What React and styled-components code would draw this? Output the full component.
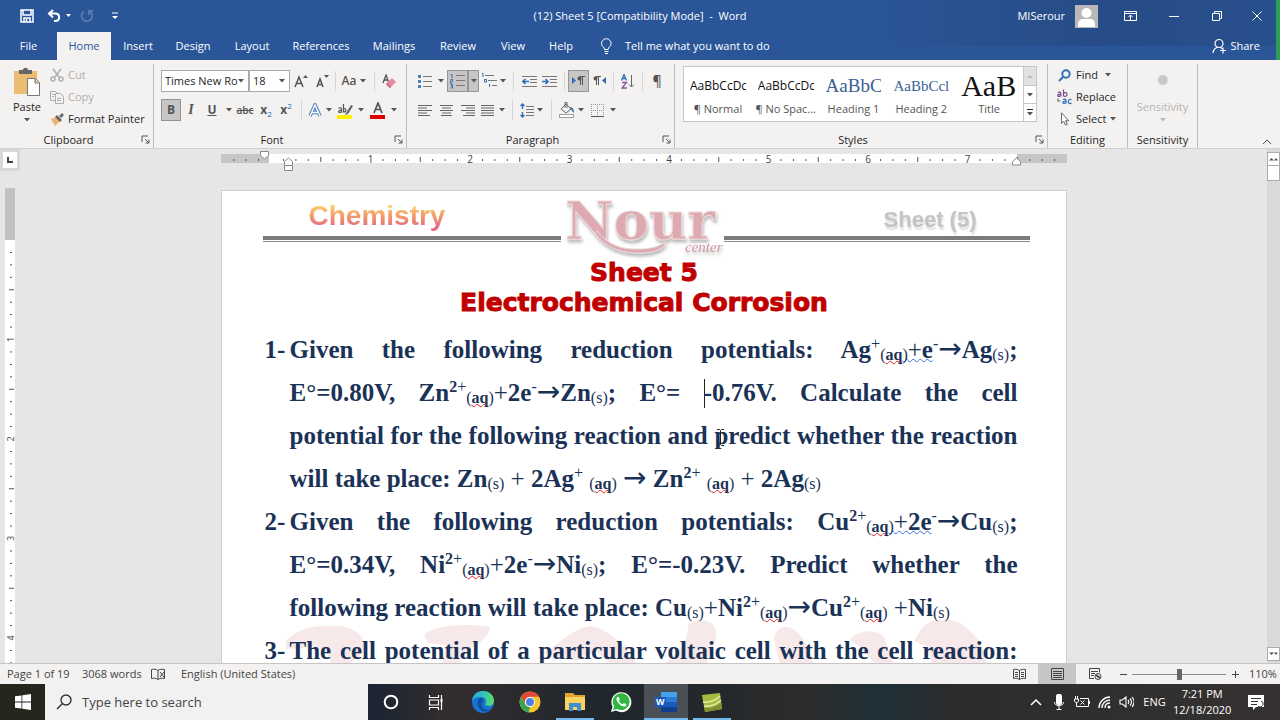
import React from "react";
import styled, { createGlobalStyle, css } from "styled-components";

const Global = createGlobalStyle`
  *, *::before, *::after { box-sizing: border-box; }
  body { margin: 0; background: #e6e6e6; }
  button, input, select { font: inherit; color: inherit; margin: 0; }
  button { border: 0; padding: 0; background: none; }
  a { color: inherit; text-decoration: none; }
`;

const ui = `"Open Sans", "Noto Sans", sans-serif`;

const App_ = styled.div`
  height: 100vh;
  display: flex;
  flex-direction: column;
  overflow: hidden;
  font-family: ${ui};
  font-size: 11px;
  line-height: 16px;
  color: #262626;
`;

/* ---------- title bar and tabs ---------- */

const Chrome = styled.header`
  background:
    linear-gradient(90deg, #25467c00, #25467c99 60%, #25467c66) 100% 0 / 440px 46px no-repeat,
    #2a5699;
  border-right: 4px solid #2f9e55;
  color: #fff;
  flex: none;
`;

const TitleBar = styled.div`
  height: 32px;
  display: grid;
  grid-template-columns: 1fr auto 1fr;
  align-items: center;
`;

const QuickAccess = styled.div`
  display: flex;
  align-items: center;
  padding-left: 20px;
  gap: 6px;
`;

const DocTitle = styled.div`
  white-space: pre;
  padding-left: 4px;
`;

const WindowTools = styled.div`
  display: flex;
  align-items: center;
  justify-content: flex-end;
`;

const Account = styled.button`
  display: flex;
  align-items: center;
  gap: 10px;
  margin-right: 11px;
`;

const WinButton = styled.button`
  width: ${(p) => p.$w || 43}px;
  height: 28px;
  display: grid;
  place-items: center;
`;

const QaButton = styled.button`
  display: grid;
  place-items: center;
  height: 20px;
`;

const TabBar = styled.nav`
  height: 28px;
  display: flex;
  align-items: stretch;
`;

const Tab = styled.a`
  width: ${(p) => p.$w}px;
  display: grid;
  place-items: center;
  ${(p) =>
    p.$active &&
    css`
      background: #f3f2f1;
      color: #2a5699;
    `}
`;

const TellMe = styled.button`
  display: flex;
  align-items: center;
  gap: 12px;
  margin-left: 17px;
`;

const Share = styled.button`
  display: flex;
  align-items: center;
  gap: 3px;
  margin-left: auto;
  padding-right: 16px;
`;

/* ---------- ribbon ---------- */

const Ribbon = styled.div`
  height: 89px;
  flex: none;
  display: flex;
  background: #f3f2f1;
  border-bottom: 1px solid #d2d0ce;
  padding-top: 4px;
`;

const Group = styled.section`
  width: ${(p) => p.$w}px;
  height: 84px;
  flex: none;
  display: flex;
  flex-direction: column;
  border-right: 1px solid #c0bebc;
  padding-left: ${(p) => p.$pad || 0}px;
`;

const GroupBody = styled.div`
  flex: 1;
  display: flex;
  ${(p) => p.$column && "flex-direction: column;"}
`;

const GroupFooter = styled.footer`
  height: 16px;
  margin-left: ${(p) => -(p.$pad || 0)}px;
  display: grid;
  grid-template-columns: 1fr auto;
  text-align: center;
  align-items: center;
  button { width: 16px; }
`;

const GroupName = styled.span`
  white-space: nowrap;
`;

const ToolRow = styled.div`
  display: flex;
  align-items: center;
  height: 22px;
  margin-top: ${(p) => p.$top}px;
`;

const Tool = styled.button`
  width: ${(p) => p.$w}px;
  height: 22px;
  flex: none;
  display: grid;
  place-items: center;
  color: #555;
  ${(p) =>
    p.$on &&
    css`
      background: #c8c6c4;
      border: 1px solid #979593;
    `}
`;

const Divider = styled.span`
  width: ${(p) => p.$w}px;
  height: 20px;
  flex: none;
  background: linear-gradient(#d8d6d4, #d8d6d4) center / 1px 100% no-repeat;
`;

const Glyph = styled.span`
  font-size: ${(p) => p.$size || 12}px;
  line-height: 16px;
  font-weight: ${(p) => (p.$bold ? 700 : 600)};
  font-style: ${(p) => (p.$italic ? "italic" : "normal")};
  font-family: ${(p) => (p.$serif ? `"Liberation Serif", serif` : ui)};
  text-decoration: ${(p) => p.$line || "none"};
  white-space: nowrap;
  sup, sub { font-size: 8px; line-height: 0; color: #2b6cb0; font-weight: 400; }
`;

const Combo = styled.label`
  width: ${(p) => p.$w}px;
  height: 22px;
  flex: none;
  display: flex;
  align-items: center;
  padding-right: 4px;
  background: #fff;
  border: 1px solid #ababab;
  select {
    appearance: none;
    flex: 1;
    min-width: 0;
    height: 20px;
    border: 0;
    background: none;
    padding: 0 0 0 3px;
  }
`;

const BigButton = styled.button`
  width: ${(p) => p.$w}px;
  display: flex;
  flex-direction: column;
  align-items: center;
  gap: 3px;
  color: ${(p) => (p.$off ? "#b5b3b1" : "inherit")};
  padding: 3px 0 0 ${(p) => p.$pad || 0}px;
`;

const SmallList = styled.div`
  display: flex;
  flex-direction: column;
`;

const SmallButton = styled.button`
  height: 22px;
  display: flex;
  align-items: center;
  gap: 4px;
  white-space: nowrap;
  color: ${(p) => (p.$off ? "#b0aeac" : "inherit")};
`;

const Gallery = styled.div`
  width: 354px;
  height: 56px;
  margin-top: 2px;
  display: flex;
  background: #fff;
  border: 1px solid #c8c6c4;
`;

const StyleCard = styled.button`
  flex: 1;
  min-width: 0;
  display: flex;
  flex-direction: column;
  align-items: center;
  padding: 0 6px;
  color: #555;
  white-space: nowrap;
`;

const Preview = styled.span`
  width: 100%;
  height: 34px;
  flex: none;
  overflow: hidden;
  text-align: left;
  line-height: 38px;
  color: ${(p) => p.$color || "#111"};
  font-size: ${(p) => p.$size}px;
  font-family: ${(p) => (p.$serif ? `"Liberation Serif", serif` : ui)};
`;

const GalleryNav = styled.div`
  width: 13px;
  display: grid;
  grid-template-rows: 1fr 1fr 1fr;
  border-left: 1px solid #c8c6c4;
  button { display: grid; place-items: center; }
  button + button { border-top: 1px solid #c8c6c4; }
  button:first-child { background: #e3e1df; }
`;

const Collapse = styled.button`
  margin-left: auto;
  align-self: flex-end;
  width: 18px;
  height: 12px;
  display: grid;
  place-items: center start;
`;

/* ---------- workspace ---------- */

const Workspace = styled.main`
  flex: 1;
  min-height: 0;
  display: grid;
  grid-template-columns: 20px 1fr 13px;
  background: #e6e6e6;
`;

const SideRuler = styled.div`
  min-height: 0;
  overflow: hidden;
  svg { display: block; }
`;

const TabStop = styled.button`
  width: 20px;
  height: 22px;
  display: grid;
  place-items: center;
  background: #fff;
  border: 3px solid #d8d8d8;
  margin-bottom: 17px;
`;

const Canvas = styled.div`
  min-width: 0;
  min-height: 0;
  display: flex;
  flex-direction: column;
  align-items: center;
  overflow: hidden;
`;

const RulerBox = styled.div`
  height: 41px;
  flex: none;
  svg { display: block; }
`;

const Paper = styled.article`
  position: relative;
  flex: 1;
  min-height: 0;
  overflow: hidden;
  width: 846px;
  max-width: 100%;
  background: #fff;
  border: 1px solid #cfcfcf;
  border-bottom: 0;
  padding: 0 36px 0 41px;
`;

const Watermark = styled.svg`
  position: absolute;
  left: 0;
  bottom: 0;
`;

const PaperHead = styled.div`
  display: flex;
  height: 67px;
`;

const HeadSide = styled.div`
  flex: ${(p) => p.$grow} 1 0;
  display: flex;
  flex-direction: column;
`;

const HeadRule = styled.div`
  height: 6px;
  background: linear-gradient(#7b7b7b 4px, #fff 4px, #fff 5px, #8a8a8a 5px);
`;

const Subject = styled.div`
  height: 45px;
  padding: 5px 0 0 46px;
  align-self: flex-start;
  font: 700 28px/40px "Liberation Sans", Arial, sans-serif;
  background: linear-gradient(#fbd36b 14px, #f39a6a 25px, #e56b82 36px);
  background-clip: text;
  -webkit-background-clip: text;
  color: transparent;
`;

const SheetNo = styled.div`
  height: 45px;
  padding: 9px 53px 0 0;
  align-self: flex-end;
  font: 700 22px/40px "Liberation Sans", Arial, sans-serif;
  color: #c4c4c4;
  text-shadow: 1px 3px 2px #e0e0e0;
`;

const Title = styled.h1`
  margin: 0;
  padding-right: 4px;
  text-align: center;
  color: #c00000;
  -webkit-text-stroke: 1px #c00000;
  font: 700 25px/30px "DejaVu Sans", sans-serif;
`;

const Questions = styled.ol`
  position: relative;
  list-style: none;
  margin: 10px 0 0;
  padding: 0 12px 0 2px;
  color: #1b3257;
  font: 700 25px/43px "Liberation Serif", "Times New Roman", serif;
`;

const Question = styled.li`
  display: grid;
  grid-template-columns: 25px 1fr;
`;

const Line = styled.span`
  display: block;
  white-space: nowrap;
  text-align: justify;
  text-align-last: ${(p) => (p.$last ? "left" : "justify")};
`;

const Thin = styled.span`
  font-weight: 400;
`;

const ArrowGlyph = styled.span`
  font: 400 28px/0 "DejaVu Sans", sans-serif;
`;

const Sup = styled.sup`
  font-size: 16px;
  line-height: 0;
  vertical-align: 9px;
`;

const Sub = styled.sub`
  font-size: 16px;
  line-height: 0;
  font-weight: 400;
  vertical-align: -2px;
`;

const Squiggle = styled.u`
  font-weight: 700;
  text-decoration: underline wavy ${(p) => p.$color || "#e02020"} 1px;
  text-underline-offset: 0;
  text-decoration-skip-ink: none;
`;

const TextCaret = styled.span`
  display: inline-block;
  width: 1px;
  height: 29px;
  margin-right: -1px;
  vertical-align: -7px;
  background: #222;
`;

const PointerWrap = styled.span`
  position: relative;
  svg { position: absolute; left: 3px; top: 7px; }
`;

const ScrollBar = styled.div`
  display: flex;
  flex-direction: column;
  padding: 3px 0 2px;
  background: #d9d9d9;
`;

const ScrollButton = styled.button`
  height: 14px;
  display: grid;
  place-items: center;
  background: #fff;
  border: 1px solid #ababab;
`;

const ScrollThumb = styled.div`
  height: 15px;
  margin-bottom: auto;
  background: #fff;
  border: 1px solid #ababab;
  border-top: 0;
`;

/* ---------- status bar ---------- */

const StatusBar = styled.footer`
  height: 21px;
  flex: none;
  display: flex;
  align-items: center;
  background: #f3f2f1;
  border-top: 1px solid #c8c6c4;
  padding-left: 7px;
  color: #444;
`;

const StatusItem = styled.span`
  width: ${(p) => p.$w}px;
  white-space: nowrap;
  svg { display: block; }
`;

const Views = styled.div`
  display: flex;
  margin-left: auto;
`;

const ViewButton = styled.button`
  width: 38px;
  height: 20px;
  display: grid;
  place-items: center;
  background: ${(p) => (p.$on ? "#c8c6c4" : "none")};
`;

const ZoomButton = styled.button`
  width: 18px;
  height: 20px;
  display: grid;
  place-items: center;
`;

const ZoomSlider = styled.input`
  appearance: none;
  width: 94px;
  height: 20px;
  background: linear-gradient(#8a8a8a, #8a8a8a) center / 100% 1px no-repeat;
  &::-webkit-slider-thumb {
    appearance: none;
    width: 5px;
    height: 11px;
    background: #666;
  }
`;

const ZoomValue = styled.span`
  width: 36px;
  padding-left: 5px;
`;

/* ---------- task bar ---------- */

const TaskBar = styled.div`
  height: 36px;
  flex: none;
  display: flex;
  align-items: stretch;
  color: #fff;
  background: linear-gradient(90deg, #25261d 0, #25261d 4%, #1b2433 29%, #332d2f 35%, #1f272d 47%, #24282c 56%, #2e2c2b 63%, #1d3038 69%, #2b2c2c 74%, #353231 100%);
`;

const StartButton = styled.button`
  width: 45px;
  display: grid;
  place-items: center;
`;

const Search = styled.label`
  width: 323px;
  display: flex;
  align-items: center;
  gap: 10px;
  padding-left: 11px;
  background: #f2f1f2;
  color: #333;
  font-size: 13px;
  input {
    flex: 1;
    min-width: 0;
    border: 0;
    outline: 0;
    padding: 0;
    background: none;
  }
  input::placeholder { color: #444; opacity: 1; }
`;

const TaskButton = styled.button`
  width: ${(p) => p.$w || 46}px;
  display: grid;
  place-items: center;
  background: ${(p) => (p.$active ? "#4b5056" : "none")};
`;

const OpenMark = styled.span`
  grid-area: 1 / 1;
  place-self: end center;
  width: ${(p) => p.$w}px;
  height: 2px;
  background: #76b9ed;
  & + svg { grid-area: 1 / 1; }
`;

const Tray = styled.div`
  margin-left: auto;
  display: flex;
  align-items: center;
`;

const TrayButton = styled.button`
  width: ${(p) => p.$w || 23}px;
  height: 36px;
  display: grid;
  place-items: center;
  line-height: 16px;
  white-space: nowrap;
`;

/* ---------- small drawings ---------- */

const Svg = ({ w = 16, h = w, sw = 1, children, vb }) => (
  <svg
    width={w}
    height={h}
    viewBox={vb || `0 0 ${w} ${h}`}
    fill="none"
    stroke="currentColor"
    strokeWidth={sw}
    aria-hidden="true"
  >
    {children}
  </svg>
);

const Caret = ({ color = "#555" }) => (
  <svg width="6" height="4" viewBox="0 0 6 4" aria-hidden="true">
    <path d="M0 0h6L3 3.5z" fill={color} />
  </svg>
);

const CaretTool = ({ w, on }) => (
  <Tool $w={w} $on={on} aria-label="More options">
    <Caret />
  </Tool>
);

const Launcher = () => (
  <Svg w={9}>
    <path d="M1 7V1h6M4 4l4 4M8 4.500V8H4.500" stroke="#555" />
  </Svg>
);

const lineIcon = (rows) => (
  <Svg w={15} h={13}>
    {rows.map(([a, b], i) => (
      <path key={i} d={`M${a} ${1.5 + i * 2.5}H${b}`} stroke="#666" />
    ))}
  </Svg>
);

const ribbonGroup = (name, launcher, pad) => (
  <GroupFooter $pad={pad}>
    <GroupName>{name}</GroupName>
    {launcher && (
      <button aria-label={`${name} settings`}>
        <Launcher />
      </button>
    )}
  </GroupFooter>
);

function Header() {
  const tabs = [
    ["File", 57],
    ["Home", 54],
    ["Insert", 54],
    ["Design", 56],
    ["Layout", 62],
    ["References", 76],
    ["Mailings", 70],
    ["Review", 58],
    ["View", 52],
    ["Help", 44],
  ];
  return (
    <Chrome>
      <TitleBar>
        <QuickAccess>
          <QaButton aria-label="Save">
            <Svg w={14} sw={1.5}>
              <path d="M1 1h12v12H1zM3 1v5h8V1M4 13V9h6v4M6.500 10v3" />
            </Svg>
          </QaButton>
          <QaButton aria-label="Undo">
            <Svg w={32} h={14} sw={2}>
              <path d="M13 1L9 4.500 13 8.500M9.500 4.500H16a3.800 3.800 0 010 7.500h-2" />
              <path d="M26 5h5l-2.500 3z" fill="#fff" stroke="none" />
            </Svg>
          </QaButton>
          <QaButton aria-label="Redo">
            <Svg w={16} h={14} sw={2}>
              <path d="M6 2.500A5.300 5.300 0 1011.500 2.300M11 6V2h4" stroke="#5578b0" />
            </Svg>
          </QaButton>
          <QaButton aria-label="Customize toolbar">
            <Svg w={24} h={8}>
              <path d="M12 1h6" />
              <path d="M12 4h6l-3 3z" fill="#fff" stroke="none" />
            </Svg>
          </QaButton>
        </QuickAccess>
        <DocTitle>{"(12) Sheet 5 [Compatibility Mode]  -  Word"}</DocTitle>
        <WindowTools>
          <Account>
            MISerour
            <svg width="23" height="23" viewBox="0 0 23 23" aria-hidden="true">
              <path fill="#b9b9b9" d="M0 0h23v23H0z" />
              <circle cx="11.500" cy="8" r="5" fill="#fff" />
              <path fill="#fff" d="M3 22v-3c0-3 2-5 5-5h7c3 0 5 2 5 5v3z" />
            </svg>
          </Account>
          <WinButton aria-label="Ribbon display options">
            <Svg w={13} h={10}>
              <path d="M.5.5h12v9H.5zM.5 2.500h12M6.500 9V4M4.500 6l2-2 2 2" />
            </Svg>
          </WinButton>
          <WinButton aria-label="Minimize">
            <Svg w={10} h={10}>
              <path d="M0 5.500h10" />
            </Svg>
          </WinButton>
          <WinButton aria-label="Restore">
            <Svg w={10}>
              <path d="M.5 2.500h7v7h-7zM2.500 2.500v-2h7v7h-2" />
            </Svg>
          </WinButton>
          <WinButton aria-label="Close" $w={38}>
            <Svg w={10}>
              <path d="M.5.5l9 9M9.500.5l-9 9" />
            </Svg>
          </WinButton>
        </WindowTools>
      </TitleBar>
      <TabBar>
        {tabs.map(([name, w]) => (
          <Tab key={name} href="#" $w={w} $active={name === "Home"}>
            {name}
          </Tab>
        ))}
        <TellMe>
          <Svg w={13} h={16}>
            <path d="M4.500 11.500c0-2.500-3-3-3-6a4.800 4.800 0 019.600 0c0 3-3 3.500-3 6zM4.500 13.500h4M5 15.500h3" />
          </Svg>
          Tell me what you want to do
        </TellMe>
        <Share>
          <Svg w={15} h={16} sw={1.2}>
            <circle cx="7" cy="5.500" r="4" />
            <path d="M1 15c.3-3 2-5 4.500-5.800M8.500 9.500l2 1.300M11 9.500v6M8 12.500h6" />
          </Svg>
          Share
        </Share>
      </TabBar>
    </Chrome>
  );
}

function Clipboard() {
  return (
    <Group $w={154}>
      <GroupBody>
        <BigButton $w={50} $pad={4}>
          <Svg w={28} h={29}>
            <path d="M1 4h23v23H1z" fill="#ebbd73" stroke="none" />
            <path d="M6 3h4c0-3 5-3 5 0h4v4H6z" fill="#666" stroke="none" />
            <path d="M14.500 11.500h8l4 4v13h-12zM22 12v4h4" fill="#fff" stroke="#777" />
          </Svg>
          <span>Paste</span>
          <Caret />
        </BigButton>
        <SmallList>
          <SmallButton $off>
            <Svg w={14} sw={1.5}>
              <path d="M3 1l6 8M11 1L5 9" />
              <circle cx="3" cy="11" r="2" />
              <circle cx="11" cy="11" r="2" />
            </Svg>
            Cut
          </SmallButton>
          <SmallButton $off>
            <Svg w={14}>
              <path d="M5 10.500H.5v-9h5l2 2M2 4.500h3M2 6.500h2M5.500 3.500h5l3 3v7h-8zM7 8.500h4M7 10.500h4" />
            </Svg>
            Copy
          </SmallButton>
          <SmallButton>
            <Svg w={14}>
              <path d="M1 7l5-2 4 4-5 5z" fill="#ebb56c" stroke="none" />
              <path d="M5 5l2-2 5 5-2 2zM9 4l3-3 2 2-3 3z" fill="#666" stroke="none" />
            </Svg>
            Format Painter
          </SmallButton>
        </SmallList>
      </GroupBody>
      {ribbonGroup("Clipboard", true)}
    </Group>
  );
}

function FontGroup() {
  return (
    <Group $w={253} $pad={7}>
      <GroupBody $column>
        <ToolRow $top={6}>
          <Combo $w={88}>
            <select aria-label="Font">
              <option>Times New Ro</option>
            </select>
            <Caret />
          </Combo>
          <Combo $w={41}>
            <select aria-label="Font size">
              <option>18</option>
            </select>
            <Caret />
          </Combo>
          <Tool $w={22} aria-label="Grow font">
            <Svg w={14}>
              <path d="M1 13L5 3l4 10M2.500 9.500h5" strokeWidth="1.500" />
              <path d="M9 4h5l-2.500-3z" fill="#555" stroke="none" />
            </Svg>
          </Tool>
          <Tool $w={20} aria-label="Shrink font">
            <Svg w={14}>
              <path d="M2 13l3-8 3 8M3 10.500h4" strokeWidth="1.500" />
              <path d="M9 1h5l-2.500 3z" fill="#555" stroke="none" />
            </Svg>
          </Tool>
          <Divider $w={7} />
          <Tool $w={20}>
            <Glyph>Aa</Glyph>
          </Tool>
          <CaretTool w={8} />
          <Divider $w={14} />
          <Tool $w={16} aria-label="Clear formatting">
            <Svg w={15}>
              <path d="M1 9l3-8 3 8M2 6h4" strokeWidth="1.300" />
              <path d="M4 10l6-6 4 4-6 6z" fill="#e58aa0" stroke="none" />
              <path d="M4 10l1-1 4 4-1 1z" fill="#b95f78" stroke="none" />
            </Svg>
          </Tool>
        </ToolRow>
        <ToolRow $top={7}>
          <Tool $w={20} $on>
            <Glyph $bold>B</Glyph>
          </Tool>
          <Tool $w={20}>
            <Glyph $italic $serif $size={14}>I</Glyph>
          </Tool>
          <Tool $w={22}>
            <Glyph $bold $line="underline">U</Glyph>
          </Tool>
          <CaretTool w={11} />
          <Tool $w={22}>
            <Glyph $size={10} $line="line-through">abc</Glyph>
          </Tool>
          <Tool $w={20}>
            <Glyph $bold>x<sub>2</sub></Glyph>
          </Tool>
          <Tool $w={20}>
            <Glyph $bold>x<sup>2</sup></Glyph>
          </Tool>
          <Divider $w={10} />
          <Tool $w={18} aria-label="Text effects">
            <Svg w={14}>
              <path d="M2 13L7 2l5 11M4 9.500h6" stroke="#4a7fc0" strokeWidth="3.500" />
              <path d="M2 13L7 2l5 11M4 9.500h6" stroke="#fff" strokeWidth="1.500" />
            </Svg>
          </Tool>
          <CaretTool w={10} />
          <Tool $w={22} aria-label="Highlight color">
            <Svg w={16} h={17}>
              <path d="M1.500 6.500c1-1 3-1 3 0v4M4.500 8.500c-3-.5-4 2-1.500 2 1 0 1.500-.5 1.500-1M6.500 2v8.500M6.500 7c3-1.500 3.500 3.500 0 3" strokeWidth="1.200" />
              <path d="M9 11l5-8 2 1-5 8-3 1z" fill="#666" stroke="none" />
              <path d="M0 13h15v4H0z" fill="#fdf000" stroke="none" />
            </Svg>
          </Tool>
          <CaretTool w={10} />
          <Tool $w={24} aria-label="Font color">
            <Svg w={16} h={17}>
              <path d="M4 11l4-10 4 10M5.500 7.500h5" strokeWidth="1.700" />
              <path d="M0 13h15v4H0z" fill="#e00000" stroke="none" />
            </Svg>
          </Tool>
          <CaretTool w={8} />
        </ToolRow>
      </GroupBody>
      {ribbonGroup("Font", true, 7)}
    </Group>
  );
}

const Indent = ({ left }) => (
  <Svg w={15} h={13}>
    <path d="M0 1.500h15M8 4.500h7M8 7.500h7M0 11.500h15" stroke="#777" />
    <path d={left ? "M7 6.500H1M3.500 4L1 6.500 3.500 9" : "M0 6.500h6M3.500 4L6 6.500 3.500 9"} stroke="#2f6fb5" strokeWidth="1.600" />
  </Svg>
);

function Paragraph() {
  return (
    <Group $w={268} $pad={9}>
      <GroupBody $column>
        <ToolRow $top={6}>
          <Tool $w={18} aria-label="Bullets">
            <Svg w={14}>
              <path d="M5 2.500h9M5 7.500h9M5 12.500h9" stroke="#777" />
              <path d="M0 1h3v3H0zM0 6h3v3H0zM0 11h3v3H0z" fill="#4a7fc0" stroke="none" />
            </Svg>
          </Tool>
          <CaretTool w={13} />
          <Tool $w={21} $on aria-label="Numbering">
            <Svg w={15} h={16}>
              <path d="M6 2.500h9M6 7.500h9M6 12.500h9" stroke="#777" />
              <path d="M1 1.500h1V5M.5 6.500h2v1.500h-2V10h2M.5 11.500h2V15h-2M1 13h1.500" stroke="#2f6fb5" />
            </Svg>
          </Tool>
          <CaretTool w={11} on />
          <Tool $w={20} aria-label="Multilevel list">
            <Svg w={16}>
              <path d="M4 2.500h9M7 7.500h9M11 12.500h5" stroke="#777" />
              <path d="M1 .5h1V4M3.500 6.500h2V9h-2zM8.500 11v3" stroke="#2f6fb5" />
            </Svg>
          </Tool>
          <CaretTool w={8} />
          <Divider $w={13} />
          <Tool $w={18} aria-label="Decrease indent"><Indent left /></Tool>
          <Tool $w={22} aria-label="Increase indent"><Indent /></Tool>
          <Divider $w={8} />
          <Tool $w={21} $on aria-label="Left to right">
            <Svg w={13} h={10}>
              <path d="M0 1l4 3.500L0 8z" fill="#2f6fb5" stroke="none" />
              <path d="M8.500 9V.5M10.500 9V.5M7.500.5H13" />
              <circle cx="7.500" cy="2.500" r="2" fill="#555" stroke="none" />
            </Svg>
          </Tool>
          <Tool $w={20} aria-label="Right to left">
            <Svg w={13} h={10}>
              <path d="M13 1L9 4.500 13 8z" fill="#2f6fb5" stroke="none" />
              <path d="M3.500 9V.5M5.500 9V.5M2.500.5H8" />
              <circle cx="2.500" cy="2.500" r="2" fill="#555" stroke="none" />
            </Svg>
          </Tool>
          <Divider $w={9} />
          <Tool $w={20} aria-label="Sort">
            <Svg w={14} h={15}>
              <path d="M.5 6.500l2.500-6 2.500 6M1.500 4.500h3" stroke="#2f6fb5" strokeWidth="1.300" />
              <path d="M1 8.500h4.500L1 14h5" stroke="#8b4fa8" strokeWidth="1.300" />
              <path d="M10.500 1v12M8 10.500l2.500 2.500 2.500-2.500" stroke="#666" />
            </Svg>
          </Tool>
          <Divider $w={8} />
          <Tool $w={22}>
            <Glyph $size={14}>¶</Glyph>
          </Tool>
        </ToolRow>
        <ToolRow $top={7}>
          <Tool $w={18} aria-label="Align left">{lineIcon([[0, 14], [0, 9], [0, 14], [0, 9], [0, 12]])}</Tool>
          <Tool $w={24} aria-label="Center">{lineIcon([[1, 14], [3, 12], [1, 14], [3, 12], [2, 13]])}</Tool>
          <Tool $w={18} aria-label="Align right">{lineIcon([[1, 15], [6, 15], [1, 15], [6, 15], [3, 15]])}</Tool>
          <Tool $w={22} aria-label="Justify">{lineIcon([[1, 14], [1, 14], [1, 14], [1, 14], [1, 14]])}</Tool>
          <CaretTool w={8} />
          <Divider $w={12} />
          <Tool $w={18} aria-label="Line spacing">
            <Svg w={14} h={15}>
              <path d="M6 3.500h8M6 6.500h8M6 9.500h8M6 12.500h8" stroke="#777" />
              <path d="M2.500 1v5M2.500 9v5M.5 3l2-2 2 2M.5 12l2 2 2-2" stroke="#2f6fb5" strokeWidth="1.400" />
            </Svg>
          </Tool>
          <CaretTool w={8} />
          <Divider $w={14} />
          <Tool $w={18} aria-label="Shading">
            <Svg w={16} h={16}>
              <path d="M2 7l5-5 5 5-5 4zM6 6V.5h2V6" stroke="#666" />
              <path d="M11 5c3 0 4 3 4 6l-2-2z" fill="#2f6fb5" stroke="none" />
              <path d="M.5 12.500h14v3H.5z" fill="#fff" stroke="#999" />
            </Svg>
          </Tool>
          <CaretTool w={10} />
          <Tool $w={22} aria-label="Borders">
            <Svg w={13}>
              <path d="M0 .5h13M.5 0v12M12.500 0v12M6.500 0v12M0 6.500h13" stroke="#999" strokeDasharray="1 1" />
              <path d="M0 12.500h13" stroke="#555" />
            </Svg>
          </Tool>
          <CaretTool w={10} />
        </ToolRow>
      </GroupBody>
      {ribbonGroup("Paragraph", true, 9)}
    </Group>
  );
}

function Styles() {
  const styles = [
    ["¶ Normal", "AaBbCcDc", { $size: 12 }],
    ["¶ No Spac...", "AaBbCcDc", { $size: 12 }],
    ["Heading 1", "AaBbC", { $size: 19, $serif: true, $color: "#3a5f96" }],
    ["Heading 2", "AaBbCcl", { $size: 15, $serif: true, $color: "#3a5f96" }],
    ["Title", "AaB", { $size: 30, $serif: true }],
  ];
  return (
    <Group $w={373} $pad={8}>
      <GroupBody>
        <Gallery>
          {styles.map(([name, sample, look]) => (
            <StyleCard key={name}>
              <Preview {...look}>{sample}</Preview>
              {name}
            </StyleCard>
          ))}
          <GalleryNav>
            <button aria-label="Previous styles">
              <Svg w={6} h={4}><path d="M0 4h6L3 1z" fill="#bbb" stroke="none" /></Svg>
            </button>
            <button aria-label="Next styles"><Caret /></button>
            <button aria-label="All styles">
              <Svg w={6} h={7}>
                <path d="M0 .5h6" />
                <path d="M0 3h6L3 6.500z" fill="#555" stroke="none" />
              </Svg>
            </button>
          </GalleryNav>
        </Gallery>
      </GroupBody>
      {ribbonGroup("Styles", true, 8)}
    </Group>
  );
}

function Editing() {
  return (
    <Group $w={80} $pad={9}>
      <GroupBody>
        <SmallList>
          <SmallButton>
            <Svg w={15} h={13} sw={2}>
              <circle cx="9" cy="5" r="3.700" stroke="#2f6fb5" />
              <path d="M6 8l-4 4" stroke="#2f6fb5" />
            </Svg>
            Find&nbsp; <Caret />
          </SmallButton>
          <SmallButton>
            <Svg w={15} h={16} sw={1.2}>
              <path d="M.8 3.600c.8-.8 3-.8 3 .8v3M3.800 5.200C1.500 5 .6 5.800.6 6.400c0 1.200 2.400 1.200 3.200 0M6.500.500v7M6.500 4.500c1-1.500 3.500-1 3.500 1s-2.500 2.500-3.500 1" stroke="#7a4a8c" />
              <path d="M6 10.600c.8-.8 3-.8 3 .8v3M9 12.200c-2.300-.2-3.200.6-3.200 1.200 0 1.200 2.400 1.200 3.200 0M14.500 10.800c-1.500-1-3.300-.2-3.300 1.700s1.800 2.600 3.300 1.600" stroke="#2f6fb5" />
              <path d="M1 9.500v2.500h2.500" stroke="#666" />
            </Svg>
            Replace
          </SmallButton>
          <SmallButton>
            <Svg w={15} h={14}>
              <path d="M4.500.8v10.500l2.400-2 1.600 3.900 1.800-.8-1.600-3.700h3z" fill="#fff" stroke="#666" />
            </Svg>
            Select <Caret />
          </SmallButton>
        </SmallList>
      </GroupBody>
      {ribbonGroup("Editing", false, 9)}
    </Group>
  );
}

function Sensitivity() {
  return (
    <Group $w={70}>
      <GroupBody>
        <BigButton $w={69} $off>
          <Svg w={28} h={29}>
            <circle cx="14" cy="13" r="5" fill="#c9c7c5" stroke="#dddbd9" />
          </Svg>
          <span>Sensitivity</span>
          <Caret color="#bbb" />
        </BigButton>
      </GroupBody>
      {ribbonGroup("Sensitivity", false)}
    </Group>
  );
}

/* One inch at the current zoom, split in eighths on the rulers. */
const INCH = 99.5;

function TopRuler() {
  const zero = 50;
  const ticks = [];
  for (let i = -3; i <= 63; i++) {
    const x = zero + (i * INCH) / 8;
    if (i % 8 === 0) {
      if (i > 0) {
        ticks.push(
          <text key={i} x={x} y="14" textAnchor="middle" fontSize="10" fill="#444">
            {i / 8}
          </text>
        );
      }
    } else {
      const tall = i % 4 === 0;
      ticks.push(<path key={i} d={`M${x} ${tall ? 8 : 10}v${tall ? 5 : 2}`} stroke="#555" />);
    }
  }
  return (
    <RulerBox>
      <svg width="846" height="26" viewBox="0 0 846 26" fontFamily="Open Sans, sans-serif" aria-hidden="true">
        <path fill="#fff" d="M0 5h846v9H0z" />
        <path fill="#c6c6c6" d="M0 5h48v9H0zM796 5h50v9h-50z" />
        {ticks}
        <g fill="#fff" stroke="#888">
          <path d="M39.500 2.500h8v4l-4 3.500-4-3.500z" />
          <path d="M63.500 16.500v-4l4-3.500 4 3.500v4zM63.500 16.500h8v5h-8z" />
          <path d="M791.500 16v-3.500l4-3.500 4 3.500V16z" />
        </g>
      </svg>
    </RulerBox>
  );
}

function LeftRuler() {
  const zero = 52;
  const marks = [];
  for (let i = 1; i <= 60; i++) {
    const y = zero + (i * INCH) / 8;
    if (i % 8 === 0) {
      marks.push(
        <text key={i} transform={`translate(14 ${y}) rotate(-90)`} textAnchor="middle" fontSize="9" fill="#444">
          {i / 8}
        </text>
      );
    } else {
      const tall = i % 4 === 0;
      marks.push(<path key={i} d={`M${tall ? 9 : 10} ${y}h${tall ? 5 : 2}`} stroke="#555" />);
    }
  }
  return (
    <svg width="20" height="800" viewBox="0 0 20 800" fontFamily="Open Sans, sans-serif" aria-hidden="true">
      <path fill="#fff" d="M5 0h10v800H5z" />
      <path fill="#c2c2c2" d="M5 0h10v52H5z" />
      {marks}
    </svg>
  );
}

const Logo = () => (
  <svg width="163" height="70" viewBox="0 0 163 70" role="img" aria-label="Nour center">
    <defs>
      <filter id="soft" x="-10%" y="-10%" width="120%" height="130%">
        <feDropShadow dx="1" dy="3" stdDeviation="1.500" floodColor="#777" floodOpacity="0.5" />
      </filter>
    </defs>
    <g filter="url(#soft)" fill="#dcaab0" stroke="#efd9da" strokeWidth="1">
      <text x="4" y="48" fontFamily="DejaVu Serif, serif" fontWeight="700" fontSize="53">
        Nour
      </text>
      <path d="M36 40c10 13 24 19 42 18 10 0 19-2 27-7-1 6-10 10-22 11-22 1-38-5-49-19z" />
      <text x="124" y="61" fontFamily="Liberation Serif, serif" fontStyle="italic" fontSize="15" fill="#cf949c" strokeWidth="0">
        center
      </text>
    </g>
  </svg>
);

const Aq = ({ open }) => (
  <Sub>
    (<Squiggle>aq</Squiggle>
    {!open && ")"}
  </Sub>
);
const S = () => <Sub>(s)</Sub>;
const Plus = () => <Thin>+</Thin>;
const Minus = () => <Sup><Thin>-</Thin></Sup>;
const Arrow = () => <ArrowGlyph>→</ArrowGlyph>;
const TwoPlus = () => <Sup>2<Plus /></Sup>;
const OnePlus = () => <Sup><Plus /></Sup>;

const Beam = () => (
  <svg width="7" height="17" viewBox="0 0 7 17" fill="none" stroke="#222" aria-hidden="true">
    <path d="M0 .5h2.500l1 1 1-1H7M3.500 1.500v14M0 16.500h2.500l1-1 1 1H7" />
  </svg>
);

function Document() {
  return (
    <Paper>
      <Watermark width="846" height="44" viewBox="0 0 846 44" fill="#f7e9e9" aria-hidden="true">
        <path d="M64 22C74 10 92 6 112 7c18 0 30 8 30 20 0 10-8 14-18 19H110l-6-14-14-4-26 2zM202 16c10-10 40-12 66-8-2 12-14 18-22 22l-10 16h-16l4-20-18-2zM322 34c16-10 28-24 46-27 16 2 30 16 44 30l2 9h-24l-16-14-20 10zM466 6c8-8 26-6 28 6 2 12-6 18-10 34h-22l-18-2c10-10 22-18 22-38zM552 20c2-14 16-16 24-6 8 8 12 18 16 32h-34zM628 20c10-10 26-10 34-2l10 28h-18l-14-16zM698 12c8-14 34-16 48-2 12 10 18 22 18 36h-54l-4-18-14-6z" />
      </Watermark>
      <PaperHead>
        <HeadSide $grow={49}>
          <Subject>Chemistry</Subject>
          <HeadRule />
        </HeadSide>
        <Logo />
        <HeadSide $grow={50}>
          <SheetNo>Sheet (5)</SheetNo>
          <HeadRule />
        </HeadSide>
      </PaperHead>
      <Title>
        Sheet 5
        <br />
        Electrochemical Corrosion
      </Title>
      <Questions>
        <Question>
          <span>1-</span>
          <div>
            <Line>
              Given the following reduction potentials: Ag<OnePlus />
              <Aq open />
              <Squiggle $color="#3b6fe0"><Sub>)</Sub><Plus />e</Squiggle>
              <Minus /><Arrow />Ag<S />;
            </Line>
            <Line>
              E°=0.80V, Zn<TwoPlus /><Aq /><Plus />2e<Minus /><Arrow />Zn<S />; E°= <TextCaret />
              -0.76V. Calculate the cell
            </Line>
            <Line>
              potential for the following reaction and <PointerWrap>p<Beam /></PointerWrap>redict whether the reaction
            </Line>
            <Line $last>
              will take place: Zn<S /> <Plus /> 2Ag<OnePlus /> <Aq /> <Arrow /> Zn<TwoPlus /> <Aq /> <Plus /> 2Ag<S />
            </Line>
          </div>
        </Question>
        <Question>
          <span>2-</span>
          <div>
            <Line>
              Given the following reduction potentials: Cu<TwoPlus />
              <Aq open />
              <Squiggle $color="#3b6fe0"><Sub>)</Sub><Plus />2e</Squiggle>
              <Minus /><Arrow />Cu<S />;
            </Line>
            <Line>
              E°=0.34V, Ni<TwoPlus /><Aq /><Plus />2e<Minus /><Arrow />Ni<S />; E°=-0.23V. Predict whether the
            </Line>
            <Line $last>
              following reaction will take place: Cu<S /><Plus />Ni<TwoPlus /><Aq /><Arrow />Cu<TwoPlus /><Aq /> <Plus />Ni<S />
            </Line>
          </div>
        </Question>
        <Question>
          <span>3-</span>
          <div>
            <Line>The cell potential of a particular voltaic cell with the cell reaction:</Line>
          </div>
        </Question>
      </Questions>
    </Paper>
  );
}

function Status() {
  return (
    <StatusBar>
      <StatusItem $w={75}>Page 1 of 19</StatusItem>
      <StatusItem $w={69}>3068 words</StatusItem>
      <StatusItem $w={30}>
        <Svg w={14} h={12}>
          <path d="M7 11.500C5 10 3 10 .5 10.500v-9C3 1 5 1 7 2.500zM7 2.500C8 1.500 10 1 13.500 1.500v9c-2-.5-4.500-.5-6.500 1M9 4l4 5M13 4L9 9" />
        </Svg>
      </StatusItem>
      <StatusItem>English (United States)</StatusItem>
      <Views>
        <ViewButton aria-label="Read mode">
          <Svg w={13} h={12}>
            <path d="M6.500 11.500C5 10.500 3 10 .5 10.500v-9c2.500-.5 4.500 0 6 1zM6.500 2.500c1.500-1 3.500-1.500 6-1v9c-2.500-.5-4.500 0-6 1M2 4.500h3M2 6.500h3M2 8.500h3M8 4.500h3M8 6.500h3M8 8.500h3" />
          </Svg>
        </ViewButton>
        <ViewButton $on aria-label="Print layout">
          <Svg w={13} h={12}>
            <path d="M.5.5h12v11H.5zM2 3.500h9M2 5.500h9M2 7.500h9M2 9.500h9" />
          </Svg>
        </ViewButton>
        <ViewButton aria-label="Web layout">
          <Svg w={13} h={12}>
            <path d="M5 10.500H.5V.5h10v4M2 3.500h7M2 5.500h4M2 7.500h3" />
            <circle cx="9" cy="8.500" r="3" />
            <path d="M7 7l4 3" strokeWidth="2" />
          </Svg>
        </ViewButton>
      </Views>
      <ZoomButton aria-label="Zoom out">
        <Svg w={9}><path d="M1 4.500h7" /></Svg>
      </ZoomButton>
      <ZoomSlider type="range" min="0" max="100" defaultValue="51" aria-label="Zoom" />
      <ZoomButton aria-label="Zoom in">
        <Svg w={9}><path d="M1 4.500h7M4.500 1v7" /></Svg>
      </ZoomButton>
      <ZoomValue>110%</ZoomValue>
    </StatusBar>
  );
}

function Tasks() {
  return (
    <TaskBar>
      <StartButton aria-label="Start">
        <svg width="16" height="16" viewBox="0 0 16 16" fill="#fff" aria-hidden="true">
          <path d="M0 2.300l6.500-.9v6.200H0zM7.300 1.300L16 0v7.600H7.300zM0 8.400h6.500v6.200L0 13.700zM7.300 8.400H16V16l-8.700-1.300z" />
        </svg>
      </StartButton>
      <Search>
        <Svg w={16} sw={1.4}>
          <circle cx="10" cy="6" r="5" />
          <path d="M6.500 9.500L1 15" />
        </Svg>
        <input type="search" placeholder="Type here to search" aria-label="Type here to search" />
      </Search>
      <TaskButton $w={45} aria-label="Cortana">
        <Svg w={16} sw={2}><circle cx="8" cy="8" r="6.300" /></Svg>
      </TaskButton>
      <TaskButton $w={45} aria-label="Task view">
        <Svg w={16} h={16} sw={1.2}>
          <path d="M1.500 1v2.500h9V1M1.500 6h9v5h-9zM1.500 16v-2.500h9V16M13.500 1v15" />
          <path d="M12.500 5h2v3h-2z" fill="#fff" stroke="none" />
        </Svg>
      </TaskButton>
      <TaskButton $w={50} aria-label="Edge">
        <svg width="24" height="24" viewBox="0 0 24 24" aria-hidden="true">
          <defs>
            <linearGradient id="edgeTop" x1="0" x2="1">
              <stop offset="0" stopColor="#2aa6e0" />
              <stop offset=".6" stopColor="#35c7b0" />
              <stop offset="1" stopColor="#5fdb5c" />
            </linearGradient>
          </defs>
          <circle cx="12" cy="12" r="11" fill="#1673cf" />
          <path d="M1 11C1.500 5 6 1 12 1c6.500 0 11 4.500 11 9.500 0 3.500-2.500 5.500-5.500 5.500-2 0-3.500-.8-3.500-1.700 0-.8 1-1.300 1-3C15 8.500 12.500 7 9.500 7 5.500 7 2 9 1 11z" fill="url(#edgeTop)" />
          <path d="M9 8c-3.500 3-3 9 1 12 3 2.300 7 2 10-.500-5 1.500-10-1-9.500-5.500.2-1.500 1-2.500 2-3 .5-2-1.500-3-3.500-3z" fill="#0f4f9e" />
        </svg>
      </TaskButton>
      <TaskButton $w={44} aria-label="Chrome">
        <svg width="22" height="22" viewBox="0 0 22 22" aria-hidden="true">
          <circle cx="11" cy="11" r="10.500" fill="#f7c52c" />
          <path d="M1.900 5.750A10.500 10.500 0 0120.100 5.750H11A5.250 5.250 0 006.500 13.600z" fill="#e04a3a" />
          <path d="M1.900 5.750L6.500 13.600A5.250 5.250 0 0011 16.250L9.500 21.400A10.500 10.500 0 011.900 5.750z" fill="#38a354" />
          <circle cx="11" cy="11" r="5" fill="#fff" />
          <circle cx="11" cy="11" r="4" fill="#4a80e8" />
        </svg>
      </TaskButton>
      <TaskButton aria-label="File Explorer">
        <OpenMark $w={38} />
        <svg width="22" height="20" viewBox="0 0 22 20" aria-hidden="true">
          <path fill="#e0a52e" d="M1 1h8l2 2h10v5H1z" />
          <path fill="#fbd25e" d="M1 5h20v13H1z" />
          <path fill="#3c8fd0" d="M5 11h12v8h-4v-4H9v4H5z" />
        </svg>
      </TaskButton>
      <TaskButton aria-label="WhatsApp">
        <svg width="22" height="22" viewBox="0 0 22 22" aria-hidden="true">
          <path fill="#fff" d="M1 21l1.500-5.200A10 10 0 116 19.600z" />
          <path fill="#2fb742" d="M3 19l1.200-3.700A8.400 8.400 0 117 17.900z" />
          <path fill="#fff" d="M7.500 6c-1.500 1-1.500 3 .5 5.500 2 2.700 4.500 4.300 6.500 4 1.300-.3 1.800-1.300 1.700-2.300l-2.400-1.100-1.200 1.300c-1.600-.6-2.900-1.900-3.700-3.400l.9-1.200L8.800 6z" />
        </svg>
      </TaskButton>
      <TaskButton $w={44} $active aria-label="Word">
        <OpenMark $w={44} />
        <svg width="22" height="20" viewBox="0 0 22 20" aria-hidden="true">
          <path fill="#41a5ee" d="M6 0h16v5H6z" />
          <path fill="#2b7cd3" d="M6 5h16v5H6z" />
          <path fill="#185abd" d="M6 10h16v5H6z" />
          <path fill="#103f91" d="M6 15h16v5H6z" />
          <path fill="#185abd" d="M0 5h11v10H0z" />
          <text x="1" y="13" fill="#fff" fontSize="9" fontWeight="700" fontFamily="Liberation Sans, sans-serif">
            W
          </text>
        </svg>
      </TaskButton>
      <TaskButton $w={48} aria-label="Camtasia">
        <OpenMark $w={38} />
        <svg width="20" height="19" viewBox="0 0 20 19" aria-hidden="true">
          <path fill="#a9bb3f" d="M0 2l18-2 2 16-17 3z" />
          <path fill="none" stroke="#e3edb0" strokeWidth="1.500" d="M1 9c7 1 12-1 17-6M2 13c7 1 13-2 17-6" />
          <path fill="#7f9130" d="M2.500 15c7 0 12-2 17-5l.5 6-17 3z" />
        </svg>
      </TaskButton>
      <Tray>
        <TrayButton aria-label="Show hidden icons">
          <Svg w={12} h={8} sw={1.5}><path d="M1 7l5-5 5 5" /></Svg>
        </TrayButton>
        <TrayButton aria-label="Microphone">
          <Svg w={12} h={16}>
            <rect x="3" y="0" width="6" height="11" rx="2" fill="#fff" stroke="none" />
            <path d="M1.500 8c0 5 9 5 9 0M6 12v3M3.500 15.500h5" />
          </Svg>
        </TrayButton>
        <TrayButton aria-label="Battery">
          <Svg w={16} h={12}>
            <path d="M1.500 0v3M3.500 0v3M.5 3h4v2c0 2-4 2-4 0zM2.500 6.500V10.500h12v-8H6M14.500 5h1v3M6.500 4.500l4 4M10.500 4.500l-4 4" />
          </Svg>
        </TrayButton>
        <TrayButton aria-label="Network">
          <Svg w={13} sw={1.3}>
            <path d="M1 12C1 6 6 1 12 1M4 12c0-4.500 3.500-8 8-8M7 12c0-3 2-5 5-5" />
            <circle cx="11" cy="11" r="1.500" fill="#fff" stroke="none" />
          </Svg>
        </TrayButton>
        <TrayButton $w={20} aria-label="Volume">
          <Svg w={15} h={12} sw={1.1}>
            <path d="M1 4h2.500L7 1v10L3.500 8H1zM9 4c1 1 1 3 0 4M11 2.500c2 2 2 5 0 7M13 1c2.500 3 2.500 7 0 10" />
          </Svg>
        </TrayButton>
        <TrayButton $w={37}>ENG</TrayButton>
        <TrayButton $w={58}>
          <span>
            7:21 PM
            <br />
            12/18/2020
          </span>
        </TrayButton>
        <TrayButton $w={49} aria-label="Notifications">
          <Svg w={16} h={15}>
            <path d="M0 0h16v12H8l-3 3v-3H0z" fill="#fff" stroke="none" />
            <path d="M3 3.500h10M3 6.500h7M3 9.500h6" stroke="#333" />
            <path d="M13 6a3 3 0 11-3 5" stroke="#333" />
          </Svg>
        </TrayButton>
      </Tray>
    </TaskBar>
  );
}

export default function App() {
  return (
    <App_>
      <Global />
      <Header />
      <Ribbon>
        <Clipboard />
        <FontGroup />
        <Paragraph />
        <Styles />
        <Editing />
        <Sensitivity />
        <Collapse aria-label="Collapse ribbon">
          <Svg w={10} h={6}><path d="M1 5l4-4 4 4" stroke="#555" /></Svg>
        </Collapse>
      </Ribbon>
      <Workspace>
        <SideRuler>
          <TabStop aria-label="Tab stop">
            <Svg w={6}><path d="M1 0v5h5" stroke="#444" strokeWidth="2" /></Svg>
          </TabStop>
          <LeftRuler />
        </SideRuler>
        <Canvas>
          <TopRuler />
          <Document />
        </Canvas>
        <ScrollBar>
          <ScrollButton aria-label="Scroll up">
            <Svg w={9} h={4}><path d="M0 3.500L2.500 1 5 3.500 7 1l2 2.500z" fill="#555" stroke="none" /></Svg>
          </ScrollButton>
          <ScrollThumb />
          <ScrollButton aria-label="Scroll down">
            <Svg w={9} h={4}><path d="M0 .5L2.500 3 5 .5 7 3 9 .5z" fill="#555" stroke="none" /></Svg>
          </ScrollButton>
        </ScrollBar>
      </Workspace>
      <Status />
      <Tasks />
    </App_>
  );
}
